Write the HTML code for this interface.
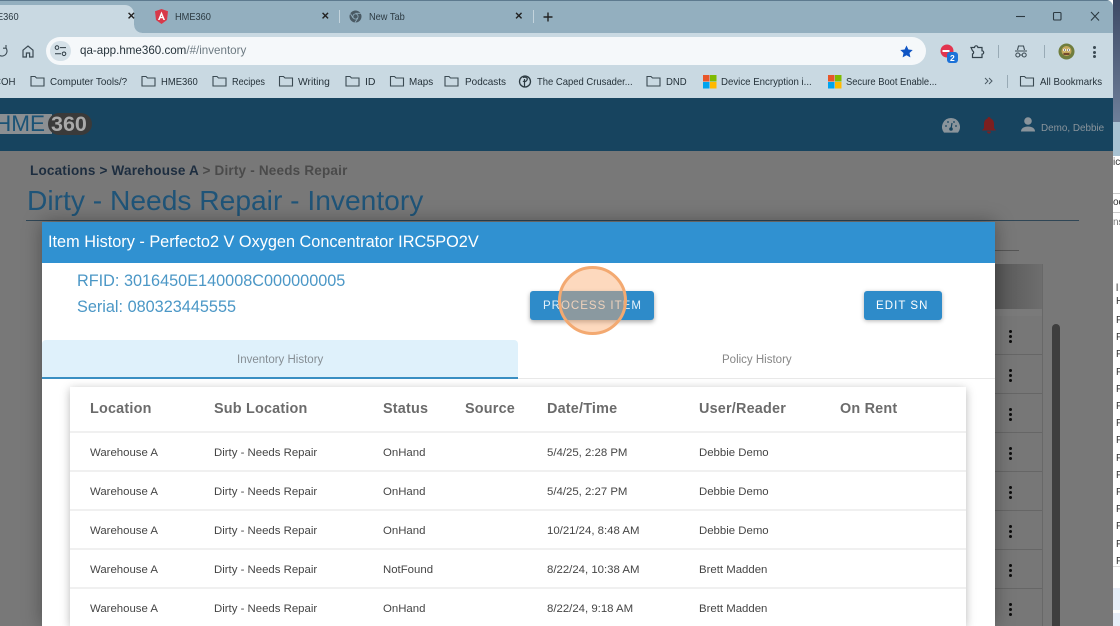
<!DOCTYPE html>
<html><head><meta charset="utf-8"><style>
html,body{margin:0;padding:0;width:1120px;height:626px;overflow:hidden;background:#fff}
body{position:relative;font-family:"Liberation Sans",sans-serif}
div,span,svg{position:absolute}
.t{white-space:nowrap;line-height:16px;height:16px}
.tab{font-size:10.5px;color:#2c3a42;transform:scaleX(.88);transform-origin:0 50%}
.bm{font-size:10.5px;color:#25323a;transform-origin:0 50%}
.h{font-size:14.4px;font-weight:bold;color:#6b6b6b;line-height:20px;height:20px;letter-spacing:.2px}
.c{font-size:11.4px;color:#454545}
.l{left:70px;width:896px;height:2px;background:#f0f0f0}
.d{left:1009px;width:3px;height:13px}
.d i{position:absolute;left:0;width:3.4px;height:3.4px;border-radius:50%;background:#0c0c0c}
.f{fill:none;stroke:#3b4a53;stroke-width:1.1}
</style></head><body>
<!-- right neighbour window -->
<div style="left:1113px;top:0;width:7px;height:626px;background:#fff"></div>
<div style="left:1113px;top:0;width:7px;height:122px;background:linear-gradient(#3d4a66,#6e7f99)"></div>
<div style="left:1113px;top:122px;width:7px;height:34px;background:#a9c3d3"></div>
<div style="left:1113px;top:156px;width:7px;height:12px;background:#fff"></div>
<div class="t" style="left:1113px;top:155px;font-size:10px;color:#333">ic</div>
<div style="left:1113px;top:193px;width:7px;height:18px;border-top:1px solid #ccc;border-bottom:1px solid #ccc"></div>
<div class="t" style="left:1113px;top:195px;font-size:10px;color:#333">oc</div>
<div class="t" style="left:1113px;top:215px;font-size:10px;color:#777">ns</div>
<div class="t" style="left:1116px;top:282px;font-size:10px;color:#333;line-height:13px;height:auto;white-space:pre">l
H</div>
<div class="t" style="left:1116px;top:312px;font-size:10px;color:#333;line-height:17.2px;height:auto;white-space:pre">P
P
P
P
P
P
P
P
P
P
P
P
P
P
P</div>
<div style="left:1113px;top:566px;width:7px;height:1px;background:#ddd"></div>
<div style="left:1113px;top:588px;width:7px;height:22px;background:#e8eef8"></div>
<div style="left:1113px;top:613px;width:7px;height:13px;background:#e8eef8"></div>

<!-- browser chrome -->
<div style="left:0;top:0;width:1113px;height:98px;background:#c9d9e2;border-top-right-radius:7px;overflow:hidden">
<div style="left:0;top:0;width:1113px;height:33px;background:#93afbf"></div>
<div style="left:0;top:0;width:1113px;height:1px;background:#5d7a8f"></div>
<div style="left:0;top:5px;width:134px;height:28px;background:#c9d9e2;border-top-right-radius:9px"></div>
<div style="left:134px;top:25px;width:8px;height:8px;background:radial-gradient(circle at 100% 0,#93afbf 7.6px,#c9d9e2 8px)"></div>
</div>
<div class="t tab" style="left:-3px;top:9px">E360</div>
<div class="t" style="left:127.5px;top:8px;font-size:13px;color:#222;font-weight:bold">×</div>
<svg style="left:155px;top:9px" width="13" height="15" viewBox="0 0 13 15"><path d="M6.5 0L13 2.3 12 11 6.5 15 1 11 0 2.3z" fill="#d8394a"/><path d="M6.5 2.5L3 11h1.6l.7-1.8h2.4l.7 1.8H10zM5.9 8L6.5 6.2 7.1 8z" fill="#fff"/></svg>
<div class="t tab" style="left:175px;top:9px">HME360</div>
<div class="t" style="left:321.5px;top:8px;font-size:13px;color:#222;font-weight:bold">×</div>
<div style="left:339px;top:10px;width:1px;height:13px;background:#c3d3dc"></div>
<svg style="left:349px;top:10px" width="13" height="13" viewBox="0 0 13 13"><circle cx="6.5" cy="6.5" r="6" fill="#4a5a64"/><circle cx="6.5" cy="6.5" r="3" fill="#93afbf"/><circle cx="6.5" cy="6.5" r="2.2" fill="#4a5a64"/><path d="M6.5 3.3H12M4 8L1.4 3.6M8.9 8L6 12.4" stroke="#93afbf" stroke-width=".8"/></svg>
<div class="t tab" style="left:369px;top:9px">New Tab</div>
<div class="t" style="left:515px;top:8px;font-size:13px;color:#222;font-weight:bold">×</div>
<div style="left:533px;top:10px;width:1px;height:13px;background:#c3d3dc"></div>
<svg style="left:543px;top:12px" width="10" height="10" viewBox="0 0 10 10"><path d="M5 .5V9.5M.5 5H9.5" stroke="#222" stroke-width="1.4"/></svg>
<!-- window controls -->
<svg style="left:1016px;top:11px" width="90" height="12" viewBox="0 0 90 12"><path d="M0 5.5H9" stroke="#2c3a42" stroke-width="1.1"/><rect x="37.5" y="1.5" width="7.5" height="7.5" rx="1" fill="none" stroke="#2c3a42" stroke-width="1.1"/><path d="M75 1L83 9.5M83 1L75 9.5" stroke="#2c3a42" stroke-width="1.1"/></svg>
<!-- toolbar -->
<svg style="left:0;top:44px" width="8" height="14" viewBox="0 0 8 14"><path d="M-3 7a5 5 0 1 0 9-3M6 1v3.2H3" fill="none" stroke="#3b4a53" stroke-width="1.1"/></svg>
<svg style="left:22px;top:45px" width="12" height="13" viewBox="0 0 12 13"><path d="M1 5.2L6 1l5 4.2V12H7.6V8H4.4v4H1z" fill="none" stroke="#3b4a53" stroke-width="1.2"/></svg>
<div style="left:46px;top:37px;width:880px;height:28px;background:#f5f8fa;border-radius:14px"></div>
<div style="left:50px;top:41px;width:21px;height:20px;background:#d5e1e8;border-radius:10px"></div>
<svg style="left:54px;top:45px" width="13" height="12" viewBox="0 0 13 12"><circle cx="3" cy="2.6" r="1.8" fill="none" stroke="#2c3a42" stroke-width="1"/><path d="M6 2.6h6M1 8.8h6" stroke="#2c3a42" stroke-width="1"/><circle cx="10" cy="8.8" r="1.8" fill="none" stroke="#2c3a42" stroke-width="1"/></svg>
<div class="t" style="left:80px;top:43px;font-size:11.6px;line-height:16px;color:#27343c">qa-app.hme360.com<span style="position:static;color:#6d7a82">/#/inventory</span></div>
<svg style="left:900px;top:45px" width="13" height="13" viewBox="0 0 13 13"><path d="M6.5 .5l1.9 4 4.3.5-3.2 3 .9 4.4-3.9-2.2-3.9 2.2.9-4.4-3.2-3 4.3-.5z" fill="#0f55c4"/></svg>
<svg style="left:939px;top:44px" width="20" height="20" viewBox="0 0 20 20"><circle cx="8" cy="7" r="6.5" fill="#e2344f"/><path d="M3.5 7h7" stroke="#fff" stroke-width="2"/><rect x="8" y="8" width="11" height="11" rx="3" fill="#1c72d8"/></svg>
<div class="t" style="left:950px;top:50px;font-size:8.5px;font-weight:bold;color:#fff">2</div>
<svg style="left:970px;top:44px" width="15" height="15" viewBox="0 0 15 15"><path d="M1 3.5h3.5a1.7 1.7 0 0 1 3.4 0H12v3.3a1.7 1.7 0 0 1 0 3.4V13.5H2.5V10a1.7 1.7 0 0 0 0-3.2L1 3.5z" fill="none" stroke="#33424b" stroke-width="1.2"/></svg>
<div style="left:998px;top:45px;width:1px;height:13px;background:#98aab5"></div>
<svg style="left:1014px;top:45px" width="14" height="14" viewBox="0 0 14 14"><path d="M3.5 5L4.5 1h5l1 4M1 6h12" fill="none" stroke="#3b4a53" stroke-width="1.1"/><circle cx="3.8" cy="10" r="2" fill="none" stroke="#3b4a53"/><circle cx="10.2" cy="10" r="2" fill="none" stroke="#3b4a53"/><path d="M5.8 10h2.4" stroke="#3b4a53"/></svg>
<div style="left:1044px;top:45px;width:1px;height:13px;background:#98aab5"></div>
<svg style="left:1058px;top:43px" width="17" height="17" viewBox="0 0 17 17"><circle cx="8.5" cy="8.5" r="8" fill="#6f7d3d"/><circle cx="8.5" cy="8" r="5" fill="#c4a85c"/><circle cx="6.5" cy="7" r="1.4" fill="#fff"/><circle cx="10.5" cy="7" r="1.4" fill="#fff"/><circle cx="6.5" cy="7" r=".6" fill="#222"/><circle cx="10.5" cy="7" r=".6" fill="#222"/><path d="M5.5 11h6" stroke="#5a2a20" stroke-width="1.5"/></svg>
<div class="d" style="left:1093px;top:46px;height:12px"><i style="top:0;width:3px;height:3px;background:#3b4a53"></i><i style="top:4.5px;width:3px;height:3px;background:#3b4a53"></i><i style="top:9px;width:3px;height:3px;background:#3b4a53"></i></div>
<!-- bookmarks -->
<div class="t bm" style="left:-6px;top:74px;transform:scaleX(.92)">COH</div>
<svg style="left:0;top:0" width="1113" height="98" viewBox="0 0 1113 98">
<path class="f" d="M31 76.500h4l1.500 1.500h7.500v8h-13z"/>
<path class="f" d="M142 76.500h4l1.500 1.500h7.500v8h-13z"/>
<path class="f" d="M213 76.500h4l1.500 1.500h7.500v8h-13z"/>
<path class="f" d="M279.500 76.500h4l1.500 1.500h7.500v8h-13z"/>
<path class="f" d="M346 76.500h4l1.500 1.500h7.500v8h-13z"/>
<path class="f" d="M390.500 76.500h4l1.500 1.500h7.500v8h-13z"/>
<path class="f" d="M445 76.500h4l1.500 1.500h7.500v8h-13z"/>
<path class="f" d="M647 76.500h4l1.500 1.500h7.500v8h-13z"/>
<path class="f" d="M1020.500 76.500h4l1.500 1.500h7.500v8h-13z"/>
<circle cx="525" cy="81.500" r="5.500" fill="none" stroke="#2c3a42" stroke-width="1.300"/><path d="M523 77.500c3-1 5 .5 4 2.500s-3 2-4 1M524.500 79v8" fill="none" stroke="#2c3a42" stroke-width="1.200"/>
<g><rect x="703" y="75" width="6.500" height="6.500" fill="#e8562a"/><rect x="710" y="75" width="6.500" height="6.500" fill="#7fba00"/><rect x="703" y="82" width="6.500" height="6.500" fill="#00a4ef"/><rect x="710" y="82" width="6.500" height="6.500" fill="#ffb900"/></g>
<g><rect x="828" y="75" width="6.500" height="6.500" fill="#e8562a"/><rect x="835" y="75" width="6.500" height="6.500" fill="#7fba00"/><rect x="828" y="82" width="6.500" height="6.500" fill="#00a4ef"/><rect x="835" y="82" width="6.500" height="6.500" fill="#ffb900"/></g>
<path d="M985 78l3 3-3 3M989 78l3 3-3 3" fill="none" stroke="#4a5a64" stroke-width="1"/>
<path d="M1007.500 75v13" stroke="#98aab5"/>
</svg>
<div class="t bm" style="left:50px;top:74px;transform:scaleX(.94)">Computer Tools/?</div>
<div class="t bm" style="left:161px;top:74px;transform:scaleX(.9)">HME360</div>
<div class="t bm" style="left:232px;top:74px;transform:scaleX(.87)">Recipes</div>
<div class="t bm" style="left:298px;top:74px;transform:scaleX(.98)">Writing</div>
<div class="t bm" style="left:365px;top:74px">ID</div>
<div class="t bm" style="left:409px;top:74px;transform:scaleX(.94)">Maps</div>
<div class="t bm" style="left:465px;top:74px;transform:scaleX(.95)">Podcasts</div>
<div class="t bm" style="left:537px;top:74px;transform:scaleX(.9)">The Caped Crusader...</div>
<div class="t bm" style="left:666px;top:74px;transform:scaleX(.91)">DND</div>
<div class="t bm" style="left:721px;top:74px;transform:scaleX(.92)">Device Encryption i...</div>
<div class="t bm" style="left:846px;top:74px;transform:scaleX(.89)">Secure Boot Enable...</div>
<div class="t bm" style="left:1040px;top:74px;transform:scaleX(.925)">All Bookmarks</div>

<!-- app header -->
<div style="left:0;top:98px;width:1113px;height:53px;background:#17445f"></div>
<div style="left:0;top:114px;width:52px;height:20px;background:#8b8f92;overflow:hidden"><div class="t" style="left:-5px;top:-1px;font-size:22.5px;line-height:22px;height:22px;color:#1b5376">HME</div></div>
<div style="left:48px;top:113px;width:44px;height:22px;background:#3a3a3a;border-radius:11px"></div>
<div class="t" style="left:51px;top:113px;font-size:21.5px;line-height:22px;height:22px;font-weight:bold;color:#a9a9a9">360</div>
<svg style="left:942px;top:118px" width="18" height="15" viewBox="0 0 18 15"><path d="M9 0a9 9 0 0 0-7 14.600h14A9 9 0 0 0 9 0z" fill="#8a949b"/><circle cx="9" cy="11" r="1.800" fill="#17445f"/><path d="M9 11l1-6" stroke="#17445f" stroke-width="1.200"/><circle cx="4" cy="8" r=".9" fill="#17445f"/><circle cx="14" cy="8" r=".9" fill="#17445f"/><circle cx="6" cy="4" r=".9" fill="#17445f"/><circle cx="12" cy="4" r=".9" fill="#17445f"/></svg>
<svg style="left:982px;top:117px" width="14" height="17" viewBox="0 0 14 17"><path d="M7 0c1 0 1.500.7 1.500 1.500C11 2.300 12 4.500 12 7v4l2 2.500H0L2 11V7c0-2.500 1-4.700 3.500-5.500C5.500.7 6 0 7 0zM5 14.500h4A2 2 0 0 1 5 14.500z" fill="#7c1f1f"/></svg>
<svg style="left:1020px;top:117px" width="16" height="15" viewBox="0 0 16 15"><circle cx="8" cy="4" r="3.800" fill="#8a949b"/><path d="M1 14.500c0-3.500 3.500-5 7-5s7 1.500 7 5z" fill="#8a949b"/></svg>
<div class="t" style="left:1041px;top:121px;font-size:9.9px;color:#8a949b">Demo, Debbie</div>

<!-- dimmed page -->
<div style="left:0;top:151px;width:1113px;height:475px;background:#787878"></div>
<div class="t" style="left:30px;top:163px;font-size:13.500px;font-weight:bold;color:#1d2d3f;letter-spacing:.2px">Locations &gt; Warehouse A <span style="position:static;color:#4a4a4a">&gt; Dirty - Needs Repair</span></div>
<div class="t" style="left:27px;top:183px;font-size:28.200px;line-height:34px;height:34px;color:#1f5478">Dirty - Needs Repair - Inventory</div>
<div style="left:26px;top:220px;width:1053px;height:1px;background:#2f4656"></div>
<div style="left:995px;top:250px;width:24px;height:1px;background:#555"></div>
<div style="left:995px;top:264px;width:48px;height:362px;background:#757575"></div>
<div style="left:995px;top:264px;width:47px;height:45px;background:linear-gradient(90deg,#575757,#6e6e6e)"></div>
<div style="left:995px;top:309px;width:47px;height:7px;background:#7a7a7a;border-bottom:1px solid #666"></div>
<div style="left:1042px;top:264px;width:1px;height:362px;background:#686868"></div>
<div style="left:995px;top:316px;width:47px;height:310px;background:repeating-linear-gradient(#777 0,#777 38px,#666 38px,#666 39px)"></div>
<div style="left:1052px;top:324px;width:8px;height:302px;background:#3e3e3e;border-radius:4px 4px 0 0"></div>
<div class="d" style="top:330px"><i style="top:0"></i><i style="top:5px"></i><i style="top:10px"></i></div>
<div class="d" style="top:369px"><i style="top:0"></i><i style="top:5px"></i><i style="top:10px"></i></div>
<div class="d" style="top:408px"><i style="top:0"></i><i style="top:5px"></i><i style="top:10px"></i></div>
<div class="d" style="top:447px"><i style="top:0"></i><i style="top:5px"></i><i style="top:10px"></i></div>
<div class="d" style="top:486px"><i style="top:0"></i><i style="top:5px"></i><i style="top:10px"></i></div>
<div class="d" style="top:525px"><i style="top:0"></i><i style="top:5px"></i><i style="top:10px"></i></div>
<div class="d" style="top:564px"><i style="top:0"></i><i style="top:5px"></i><i style="top:10px"></i></div>
<div class="d" style="top:603px"><i style="top:0"></i><i style="top:5px"></i><i style="top:10px"></i></div>

<!-- modal -->
<div style="left:42px;top:222px;width:953px;height:404px;background:#fff;box-shadow:0 0 18px rgba(0,0,0,.35)"></div>
<div style="left:42px;top:222px;width:953px;height:41px;background:#3091d1"></div>
<div class="t" style="left:48px;top:233px;font-size:16.300px;line-height:18px;height:18px;color:#fff">Item History - Perfecto2 V Oxygen Concentrator IRC5PO2V</div>
<div class="t" style="left:77px;top:272px;font-size:16.250px;line-height:18px;height:18px;color:#4b97c6">RFID: 3016450E140008C000000005</div>
<div class="t" style="left:77px;top:298px;font-size:16.250px;line-height:18px;height:18px;color:#4b97c6">Serial: 080323445555</div>
<div style="left:530px;top:291px;width:124px;height:29px;background:#2e8bc9;border-radius:3px;box-shadow:0 2px 5px rgba(0,0,0,.35)"></div>
<div class="t" style="left:543px;top:298px;font-size:11.500px;color:#e4f1fa;letter-spacing:1px">PROCESS ITEM</div>
<div style="left:864px;top:291px;width:78px;height:29px;background:#2e8bc9;border-radius:3px;box-shadow:0 1px 4px rgba(0,0,0,.3)"></div>
<div class="t" style="left:876px;top:298px;font-size:11.500px;color:#fff;letter-spacing:1.050px">EDIT SN</div>
<div style="left:558px;top:266px;width:63px;height:63px;border-radius:50%;background:rgba(251,170,110,.45);border:3px solid #f3a971"></div>
<!-- tabs -->
<div style="left:42px;top:340px;width:476px;height:37px;background:#dff1fb;border-radius:4px 4px 0 0"></div>
<div style="left:42px;top:377px;width:476px;height:2px;background:#3a8fc2"></div>
<div style="left:518px;top:378px;width:477px;height:1px;background:#e8e8e8"></div>
<div class="t" style="left:237px;top:352px;font-size:11.500px;color:#868e94">Inventory History</div>
<div class="t" style="left:722px;top:352px;font-size:11.500px;color:#868686">Policy History</div>
<!-- table -->
<div style="left:70px;top:387px;width:896px;height:239px;background:#fff;box-shadow:0 2px 9px rgba(0,0,0,.28)"></div>
<div class="t h" style="left:90px;top:399px">Location</div>
<div class="t h" style="left:214px;top:399px">Sub Location</div>
<div class="t h" style="left:383px;top:399px">Status</div>
<div class="t h" style="left:465px;top:399px">Source</div>
<div class="t h" style="left:547px;top:399px">Date/Time</div>
<div class="t h" style="left:699px;top:399px">User/Reader</div>
<div class="t h" style="left:840px;top:399px">On Rent</div>
<div class="l" style="top:431px"></div><div class="l" style="top:470px"></div><div class="l" style="top:509px"></div><div class="l" style="top:548px"></div><div class="l" style="top:587px"></div>

<div class="t c" style="left:90px;top:445px">Warehouse A</div><div class="t c" style="left:214px;top:445px">Dirty - Needs Repair</div><div class="t c" style="left:383px;top:445px">OnHand</div><div class="t c" style="left:547px;top:445px">5/4/25, 2:28 PM</div><div class="t c" style="left:699px;top:445px">Debbie Demo</div>
<div class="t c" style="left:90px;top:484px">Warehouse A</div><div class="t c" style="left:214px;top:484px">Dirty - Needs Repair</div><div class="t c" style="left:383px;top:484px">OnHand</div><div class="t c" style="left:547px;top:484px">5/4/25, 2:27 PM</div><div class="t c" style="left:699px;top:484px">Debbie Demo</div>
<div class="t c" style="left:90px;top:523px">Warehouse A</div><div class="t c" style="left:214px;top:523px">Dirty - Needs Repair</div><div class="t c" style="left:383px;top:523px">OnHand</div><div class="t c" style="left:547px;top:523px">10/21/24, 8:48 AM</div><div class="t c" style="left:699px;top:523px">Debbie Demo</div>
<div class="t c" style="left:90px;top:562px">Warehouse A</div><div class="t c" style="left:214px;top:562px">Dirty - Needs Repair</div><div class="t c" style="left:383px;top:562px">NotFound</div><div class="t c" style="left:547px;top:562px">8/22/24, 10:38 AM</div><div class="t c" style="left:699px;top:562px">Brett Madden</div>
<div class="t c" style="left:90px;top:601px">Warehouse A</div><div class="t c" style="left:214px;top:601px">Dirty - Needs Repair</div><div class="t c" style="left:383px;top:601px">OnHand</div><div class="t c" style="left:547px;top:601px">8/22/24, 9:18 AM</div><div class="t c" style="left:699px;top:601px">Brett Madden</div>
</body></html>
